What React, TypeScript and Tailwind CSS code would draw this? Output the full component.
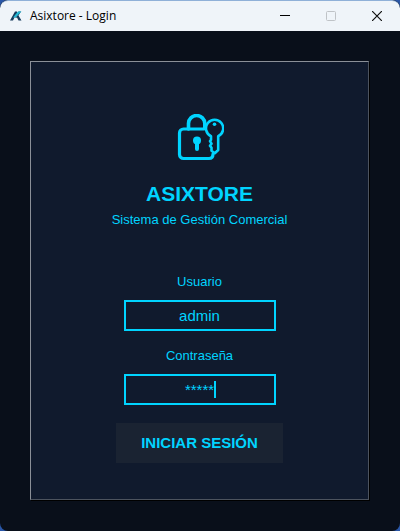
import { useState } from "react";
import type { FormEvent } from "react";

function AppLogo() {
  return (
    <svg viewBox="0 0 24 20" className="h-2.5 w-3" aria-hidden="true">
      <path d="M0 19 10 1h4l1 5-3 1-6 12z" fill="#173b5c" />
      <path d="M15 8 17 1h5l-5 8 6 10h-6l-3-6-4 1 5-6z" fill="#173b5c" />
      <path d="M23 1 11 13H6l10-12z" fill="#22b8d4" />
    </svg>
  );
}

function TitleBar() {
  return (
    <header className="flex h-[31px] shrink-0 items-center justify-between rounded-t-lg border-t border-[#8fb0d8] bg-[#eff4f9]">
      <div className="flex items-center gap-2 pl-2.5">
        <AppLogo />
        <span className="font-['Open_Sans','Noto_Sans',sans-serif] text-xs text-black">
          Asixtore - Login
        </span>
      </div>
      <div className="flex h-full items-center">
        <button type="button" aria-label="Minimizar" className="flex h-full w-[46px] items-center justify-center">
          <svg width="10" height="10" viewBox="0 0 10 10" aria-hidden="true">
            <path d="M0 4.500h10" stroke="#000" />
          </svg>
        </button>
        <button type="button" aria-label="Maximizar" disabled className="flex h-full w-[46px] items-center justify-center">
          <svg width="10" height="10" viewBox="0 0 10 10" fill="none" aria-hidden="true">
            <rect x="0.5" y="0.5" width="9" height="9" rx="1" stroke="#bfc3c7" />
          </svg>
        </button>
        <button type="button" aria-label="Cerrar" className="flex h-full w-[46px] items-center justify-center">
          <svg width="10" height="10" viewBox="0 0 10 10" aria-hidden="true">
            <path d="M0 0l10 10M10 0L0 10" stroke="#111" strokeWidth="1.2" />
          </svg>
        </button>
      </div>
    </header>
  );
}

function LockIcon() {
  return (
    <svg width="48" height="48" viewBox="0 0 48 48" fill="none" stroke="#00d4ff" strokeLinecap="round" strokeLinejoin="round" aria-hidden="true">
      <path
        d="M28 15H7.500a4 4 0 0 0-4 4v21.500a4 4 0 0 0 4 4h25.500c2.500 0 4-1.500 4-4.500"
        strokeWidth="3.2"
      />
      <path d="M12.500 15V9.500a8 7.800 0 0 1 16.300 0V14" strokeWidth="3.6" />
      <circle cx="21" cy="26.500" r="4" fill="#00d4ff" stroke="none" />
      <path d="M21 27v8" strokeWidth="4" />
      <path
        d="M35 22.200a8.600 8.600 0 1 1 7.200 0v13.800l-3.400 3.200-3.300-2.500v-3l-1.500-2 1.500-2-1.500-2.500 1-1.500z"
        strokeWidth="2.6"
      />
      <circle cx="38.500" cy="10.300" r="1.800" fill="#00d4ff" stroke="none" />
    </svg>
  );
}

const fieldClass =
  "block h-[31px] w-full border-2 border-[#00d4ff] bg-transparent text-center text-[15px] text-[#00d4ff] caret-transparent outline-none";

export default function App() {
  const [user, setUser] = useState("admin");
  const [password, setPassword] = useState("*****");
  const submit = (event: FormEvent) => event.preventDefault();

  return (
    <div className="min-h-screen bg-[#2a57a8]">
      <div className="flex min-h-screen flex-col overflow-hidden rounded-lg bg-[#090f1a] font-['Liberation_Sans',Arial,sans-serif] text-[#00d4ff]">
        <TitleBar />
        <main className="flex grow flex-col pt-[30px] pr-[31px] pb-[31px] pl-[30px]">
          <form
            onSubmit={submit}
            className="flex grow flex-col items-center border border-t-[#8b9098] border-r-[#4c535e] border-b-[#4c535e] border-l-[#8b9098] bg-[#101a2d] pt-[52px] pb-9 shadow-[1px_1px_0_#000]"
          >
            <LockIcon />
            <h1 className="mt-5 text-[21px] leading-6 font-bold">ASIXTORE</h1>
            <p className="mt-1.5 text-[13px] leading-4">Sistema de Gestión Comercial</p>

            <div className="mt-[46px] flex w-[152px] flex-col items-center">
              <label htmlFor="usuario" className="text-[13px] leading-4">
                Usuario
              </label>
              <input
                id="usuario"
                className={`${fieldClass} mt-2.5`}
                value={user}
                onChange={(event) => setUser(event.target.value)}
              />
              <label htmlFor="clave" className="mt-[17px] text-[13px] leading-4">
                Contraseña
              </label>
              <div className="relative mt-2.5 w-full">
                <input
                  id="clave"
                  className={fieldClass}
                  autoComplete="off"
                  value={password}
                  onChange={(event) => setPassword(event.target.value.replace(/./g, "*"))}
                />
                <span
                  aria-hidden="true"
                  className="pointer-events-none absolute top-[7px] left-[90px] h-[17px] w-0.5 bg-[#00d4ff]"
                />
              </div>
            </div>

            <button type="submit" className="mt-[18px] h-10 w-[167px] bg-[#1a2332] text-[15px] font-bold">
              INICIAR SESIÓN
            </button>
          </form>
        </main>
      </div>
    </div>
  );
}
